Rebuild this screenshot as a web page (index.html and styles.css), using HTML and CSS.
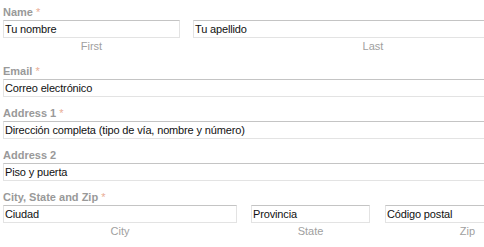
FILE: index.html
```html
<!DOCTYPE html>
<html lang="es">
<head>
<meta charset="utf-8">
<title>Formulario</title>
<link rel="stylesheet" href="styles.css">
</head>
<body>
<form class="form">
  <div class="field">
    <div class="label">Name <span class="req">*</span></div>
    <div class="row row-name">
      <div class="col">
        <div class="input">Tu nombre</div>
        <div class="sub">First</div>
      </div>
      <div class="col">
        <div class="input">Tu apellido</div>
        <div class="sub">Last</div>
      </div>
    </div>
  </div>
  <div class="field">
    <div class="label">Email <span class="req">*</span></div>
    <div class="input">Correo electrónico</div>
  </div>
  <div class="field">
    <div class="label">Address 1 <span class="req">*</span></div>
    <div class="input">Dirección completa (tipo de vía, nombre y número)</div>
  </div>
  <div class="field">
    <div class="label">Address 2</div>
    <div class="input">Piso y puerta</div>
  </div>
  <div class="field">
    <div class="label">City, State and Zip <span class="req">*</span></div>
    <div class="row row-city">
      <div class="col">
        <div class="input">Ciudad</div>
        <div class="sub">City</div>
      </div>
      <div class="col">
        <div class="input">Provincia</div>
        <div class="sub">State</div>
      </div>
      <div class="col">
        <div class="input">Código postal</div>
        <div class="sub">Zip</div>
      </div>
    </div>
  </div>
</form>
</body>
</html>
```
FILE: styles.css
```css
html, body {
  margin: 0;
  padding: 0;
  background: #ffffff;
  overflow: hidden;
}
body {
  font-family: "Liberation Sans", Arial, sans-serif;
  color: #1a1a1a;
}
.form {
  width: 551px;
  padding: 5px 0 0 3px;
}
.field {
  margin-bottom: 9px;
}
.label {
  font-size: 11px;
  font-weight: bold;
  color: #999999;
  line-height: 15px;
  height: 15px;
}
.req {
  color: #e9ad94;
  font-weight: normal;
}
.input {
  box-sizing: border-box;
  height: 18px;
  border: 1px solid #e3e3e3;
  border-top-color: #c4c4c4;
  padding: 0 2px 0 1px;
  font-size: 11px;
  letter-spacing: -0.15px;
  line-height: 16px;
  color: #111;
  white-space: nowrap;
  overflow: hidden;
}
.row {
  display: grid;
}
.row-name {
  grid-template-columns: 177px 360px;
  column-gap: 13px;
}
.row-city {
  grid-template-columns: 234px 119px 166px;
  column-gap: 14px;
}
.row-city .col:last-child {
  margin-left: 1px;
}
.sub {
  font-size: 11px;
  color: #a0a0a0;
  text-align: center;
  line-height: 17px;
  height: 17px;
}
```
